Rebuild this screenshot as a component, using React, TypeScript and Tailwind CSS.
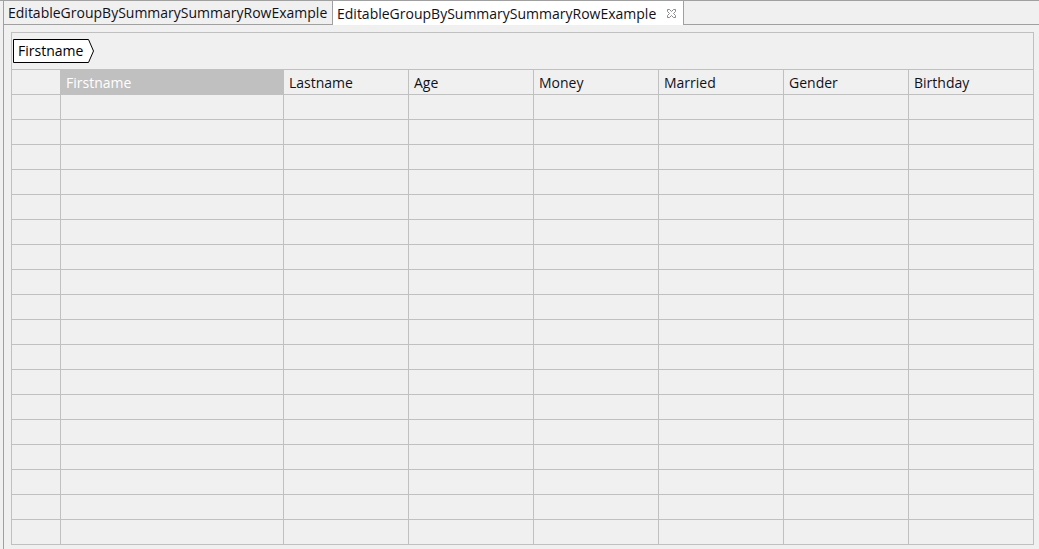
const columns = [
  { label: 'Firstname', width: 'w-[223px]', selected: true },
  { label: 'Lastname', width: 'w-[125px]' },
  { label: 'Age', width: 'w-[125px]' },
  { label: 'Money', width: 'w-[125px]' },
  { label: 'Married', width: 'w-[125px]' },
  { label: 'Gender', width: 'w-[125px]' },
  { label: 'Birthday', width: 'w-[124px]', last: true },
];

const rowCount = 18;

function CloseIcon() {
  return (
    <svg width="11" height="11" viewBox="0 0 11 11" className="text-[#8a8a8a]">
      <path
        d="M1.5 1.5h2l2 2 2-2h2v2l-2 2 2 2v2h-2l-2-2-2 2h-2v-2l2-2-2-2z"
        fill="none"
        stroke="currentColor"
        strokeWidth="1"
      />
    </svg>
  );
}

function GroupChip({ label }: { label: string }) {
  return (
    <div className="relative h-[24px] w-[81px] flex items-center">
      <svg width="81" height="24" viewBox="0 0 81 24" className="absolute inset-0">
        <path d="M0.5 0.5H75.5L80.5 12L75.5 23.5H0.5Z" fill="#ffffff" stroke="#000000" strokeWidth="1" />
      </svg>
      <span className="relative pl-[5px] text-[14px] text-black leading-none">{label}</span>
    </div>
  );
}

function Row({ header, isLast }: { header?: boolean; isLast?: boolean }) {
  return (
    <div className={`flex ${header ? 'h-[25px] border-b' : isLast ? 'h-[24px]' : 'h-[25px] border-b'} border-[#c0c0c0]`}>
      <div className="w-[49px] shrink-0 border-r border-[#c0c0c0]" />
      {columns.map((col) => (
        <div
          key={col.label}
          className={`${col.width} shrink-0 ${col.last ? '' : 'border-r border-[#c0c0c0]'} ${
            header && col.selected ? 'bg-[#c0c0c0] text-white' : 'text-[#101018]'
          } flex items-center pl-[5px] text-[14px]`}
        >
          {header ? col.label : null}
        </div>
      ))}
    </div>
  );
}

export default function App() {
  return (
    <div className="w-[1039px] h-[549px] overflow-hidden bg-[#f0f0f0] font-['Segoe_UI','Open_Sans','Noto_Sans',sans-serif]">
      {/* Tab bar */}
      <div className="flex h-[25px] border-t border-[#a0a0a0]">
        <div className="ml-[3px] w-[330px] h-[24px] border-l border-r border-b border-[#a0a0a0] flex items-center pl-[4px] text-[14px] text-[#101018] whitespace-nowrap">
          EditableGroupBySummarySummaryRowExample
        </div>
        <div className="w-[351px] h-[24px] bg-white border-r border-[#a0a0a0] flex items-center pl-[4px] pr-[6px] text-[14px] text-[#101018] whitespace-nowrap">
          <span className="flex-1">EditableGroupBySummarySummaryRowExample</span>
          <CloseIcon />
        </div>
        <div className="flex-1 h-[24px] border-b border-[#a0a0a0]" />
      </div>

      {/* Editor body */}
      <div className="ml-[3px] h-[524px] border-l border-[#a0a0a0] pl-[7px] pt-[7px]">
        <div className="w-[1023px] border border-[#c0c0c0]">
          <div className="h-[37px] border-b border-[#c0c0c0] pl-[1px] pt-[6px]">
            <GroupChip label="Firstname" />
          </div>
          <Row header />
          {Array.from({ length: rowCount }).map((_, i) => (
            <Row key={i} isLast={i === rowCount - 1} />
          ))}
        </div>
      </div>
    </div>
  );
}
